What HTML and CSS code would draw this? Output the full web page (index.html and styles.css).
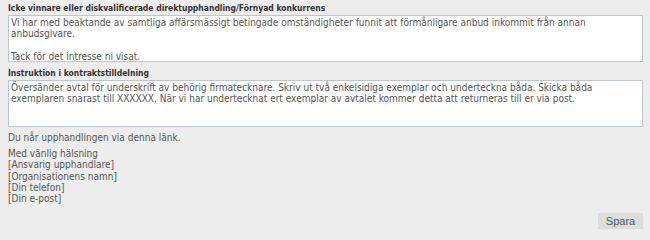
FILE: index.html
```html
<!DOCTYPE html>
<html lang="sv">
<head>
<meta charset="utf-8">
<link rel="stylesheet" href="styles.css">
</head>
<body>
<form class="form">
  <div class="field">
    <label class="label">Icke vinnare eller diskvalificerade direktupphandling/Förnyad konkurrens</label>
    <div class="box">Vi har med beaktande av samtliga affärsmässigt betingade omständigheter funnit att förmånligare anbud inkommit från annan anbudsgivare.<br><br>Tack för det intresse ni visat.</div>
  </div>
  <div class="field">
    <label class="label">Instruktion i kontraktstilldelning</label>
    <div class="box">Översänder avtal för underskrift av behörig firmatecknare. Skriv ut två enkelsidiga exemplar och underteckna båda. Skicka båda exemplaren snarast till XXXXXX. När vi har undertecknat ert exemplar av avtalet kommer detta att returneras till er via post.</div>
  </div>
  <p class="note">Du når upphandlingen via denna länk.</p>
  <p class="sign">Med vänlig hälsning<br>[Ansvarig upphandlare]<br>[Organisationens namn]<br>[Din telefon]<br>[Din e-post]</p>
  <div class="actions"><button type="button" class="btn">Spara</button></div>
</form>
</body>
</html>
```
FILE: styles.css
```css
html, body { margin: 0; padding: 0; }
body {
  background: #ededed;
  font-family: "DejaVu Sans Condensed", "DejaVu Sans", sans-serif;
  font-size: 10px;
  color: #555;
  width: 650px;
  height: 240px;
  overflow: hidden;
}
.form { padding: 3px 7px 0 8px; display: flex; flex-direction: column; }
.field { display: flex; flex-direction: column; margin-bottom: 6px; }
.label {
  color: #333;
  font-size: 8.5px;
  font-weight: bold;
  line-height: 11px;
  margin-bottom: 1px;
}
.box {
  background: #fff;
  border: 1px solid #b9c6d6;
  height: 44px;
  padding: 1px 3px 0 2px;
  line-height: 11.4px;
  color: #555;
  overflow: hidden;
}
.note { margin: -1px 0 5px; line-height: 11px; }
.sign { margin: 0; line-height: 11.3px; }
.actions { display: flex; justify-content: flex-end; margin-top: 9px; }
.btn {
  font-family: "Liberation Sans", Arial, sans-serif;
  font-size: 11px;
  color: #555;
  background: #dddddd;
  border: none;
  padding: 0 6px;
  height: 16px;
  width: 45px;
}
```
